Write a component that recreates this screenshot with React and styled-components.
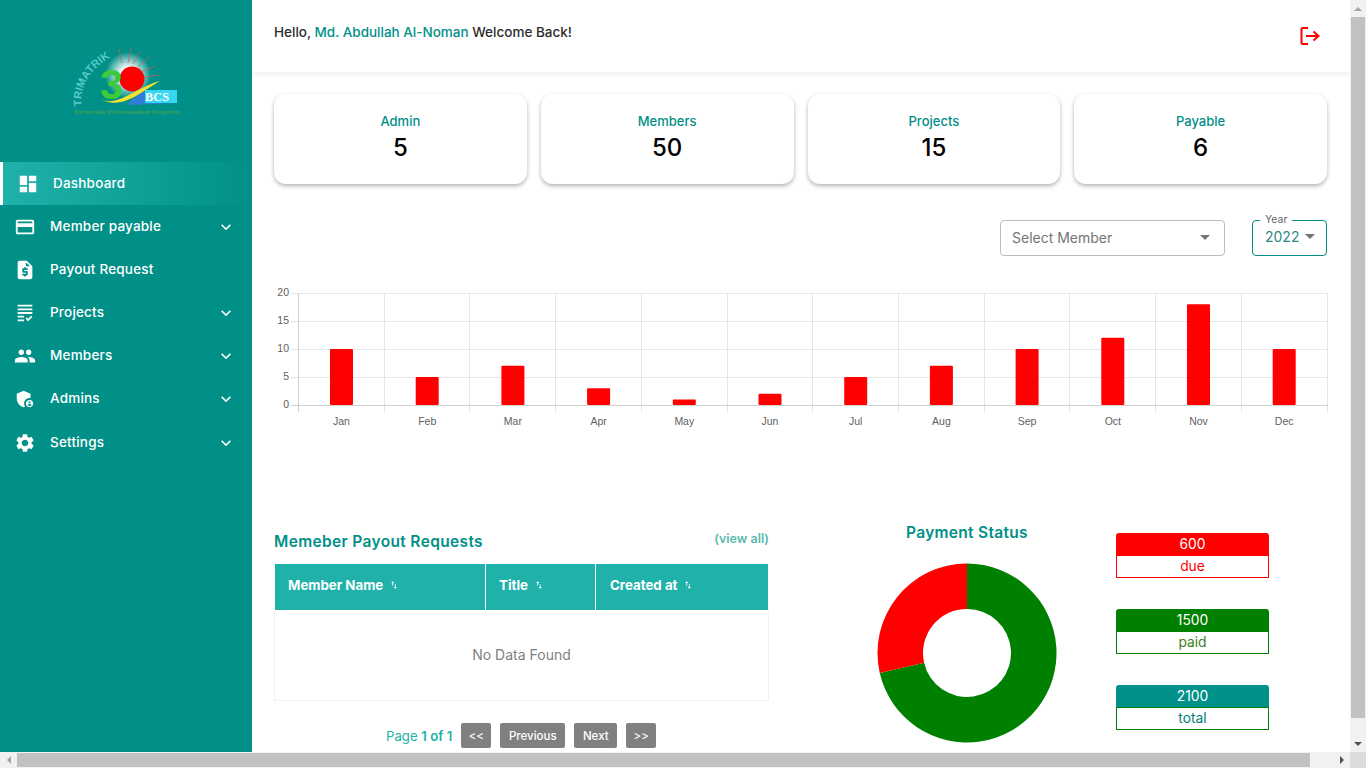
import React from "react";
import styled, { createGlobalStyle } from "styled-components";
import {
  MdDashboard,
  MdCreditCard,
  MdRequestQuote,
  MdGrading,
  MdPeople,
  MdAdminPanelSettings,
  MdSettings,
  MdKeyboardArrowDown,
  MdSwapVert,
} from "react-icons/md";

const TEAL = "#009087";
const SEA = "#20b2aa";

const menu = [
  { label: "Member payable", Icon: MdCreditCard, arrow: true },
  { label: "Payout Request", Icon: MdRequestQuote },
  { label: "Projects", Icon: MdGrading, arrow: true },
  { label: "Members", Icon: MdPeople, arrow: true },
  { label: "Admins", Icon: MdAdminPanelSettings, arrow: true },
  { label: "Settings", Icon: MdSettings, arrow: true },
];
const cards = [
  { label: "Admin", value: 5 },
  { label: "Members", value: 50 },
  { label: "Projects", value: 15 },
  { label: "Payable", value: 6 },
];
const months = [
  ["Jan", 10], ["Feb", 5], ["Mar", 7], ["Apr", 3], ["May", 1], ["Jun", 2],
  ["Jul", 5], ["Aug", 7], ["Sep", 10], ["Oct", 12], ["Nov", 18], ["Dec", 10],
];
const stats = [
  { value: 600, label: "due", head: "red", line: "red", text: "red" },
  { value: 1500, label: "paid", head: "green", line: "green", text: "#3d7d20" },
  { value: 2100, label: "total", head: "#00918a", line: "green", text: "#00807a" },
];
const pages = [
  { label: "<<", width: 30 },
  { label: "Previous", width: 65 },
  { label: "Next", width: 43 },
  { label: ">>", width: 30 },
];

const Logo = () => (
  <svg width="123" height="76" viewBox="66 44 123 76">
    <defs>
      <radialGradient id="glow">
        <stop offset="30%" stopColor="#fff" />
        <stop offset="100%" stopColor="#fff" stopOpacity="0" />
      </radialGradient>
      <path id="arc" d="M82 105 C 78 84 94 60 126 50" fill="none" />
    </defs>
    <circle cx="128" cy="74" r="23" fill="url(#glow)" />
    <g stroke="#d8565f" strokeWidth="0.7">
      <path d="M122 62 L119 48M128 62 L131 46M133 63 L140 50M138 66 L150 55M141 71 L155 65M143 76 L158 74" />
    </g>
    <circle cx="132" cy="78" r="12.5" fill="#f00" />
    <text x="100" y="98" fontFamily="'Liberation Sans', sans-serif" fontWeight="700" fontSize="42" fill="#3ecb3a" textLength="23" lengthAdjust="spacingAndGlyphs">3</text>
    <path d="M126 104 L142 90 L177 89 L177 102Z" fill="#2f7fd8" />
    <path d="M100 98 C 118 107 136 86 160 80 C 142 90 122 110 100 98Z" fill="#f4e32c" />
    <rect x="145" y="89" width="32" height="13" fill="#35d7f2" />
    <text x="145" y="100" fontFamily="'Liberation Serif', serif" fontWeight="700" fontSize="12" fill="#fff" textLength="24" lengthAdjust="spacingAndGlyphs">BCS</text>
    <text fontFamily="'Liberation Sans', sans-serif" fontWeight="700" fontSize="11" fill="#55c9cc">
      <textPath href="#arc">TRIMATRIK</textPath>
    </text>
    <text x="74" y="113" fontFamily="'Liberation Serif', serif" fontWeight="700" fontSize="6.5" fill="#3f9f58" textLength="106">Partnership Professionalism Prosperity</text>
  </svg>
);

const LogoutIcon = () => (
  <LogoutSvg width="20" height="20" viewBox="0 0 20 20" fill="none" stroke="#f00" strokeWidth="2">
    <path d="M8 2 H3 a1.5 1.5 0 0 0 -1.5 1.5 V16.5 a1.5 1.5 0 0 0 1.5 1.5 H8" />
    <path d="M6 10 H18.5 M13.5 5.5 L18.5 10 L13.5 14.5" />
  </LogoutSvg>
);

const BarChart = () => (
  <svg width="1056" height="150" viewBox="274 285 1056 150">
    {[293, 321, 349, 377].map((y) => (
      <line key={y} x1="291" x2="1328" y1={y + 0.5} y2={y + 0.5} stroke="#e6e6e6" />
    ))}
    {months.map((_, i) => {
      const x = Math.round(298 + i * 85.7) + 0.5;
      return <line key={i} x1={x} x2={x} y1="293" y2="412" stroke={i === 0 ? "#d0d0d0" : "#e6e6e6"} />;
    })}
    <line x1="1327.5" x2="1327.5" y1="293" y2="412" stroke="#e6e6e6" />
    <line x1="291" x2="1328" y1="405.5" y2="405.5" stroke="#d0d0d0" />
    {months.map(([name, value], i) => {
      const center = 341.5 + i * 85.7;
      return (
        <g key={name}>
          <rect x={center - 11.5} y={405 - value * 5.6} width="23" height={value * 5.6} rx="1" fill="#f00" />
          <text x={center} y="425" textAnchor="middle" fontFamily="'Liberation Sans', sans-serif" fontSize="10.5" fill="#5f5f5f">{name}</text>
        </g>
      );
    })}
    {[20, 15, 10, 5, 0].map((v, i) => (
      <text key={v} x="289" y={296 + i * 28} textAnchor="end" fontFamily="'Liberation Sans', sans-serif" fontSize="10.5" fill="#5f5f5f">{v}</text>
    ))}
  </svg>
);

// green goes clockwise from the top, red closes the ring: 600 of 2100
const Donut = () => {
  const point = (r, deg) => {
    const a = (deg * Math.PI) / 180;
    return `${90 + r * Math.sin(a)} ${90 - r * Math.cos(a)}`;
  };
  const end = (1500 / 2100) * 360;
  return (
    <svg width="180" height="180" viewBox="0 0 180 180">
      <path d={`M${point(89.5, 0)} A89.5 89.5 0 1 1 ${point(89.5, end)} L${point(44, end)} A44 44 0 1 0 ${point(44, 0)}Z`} fill="green" />
      <path d={`M${point(89.5, end)} A89.5 89.5 0 0 1 ${point(89.5, 360)} L${point(44, 360)} A44 44 0 0 0 ${point(44, end)}Z`} fill="#f00" />
    </svg>
  );
};

const App = () => {
  return (
    <>
      <GlobalStyle />
      <Frame>
        <Upper>
          <Sidebar>
            <LogoBox>
              <Logo />
            </LogoBox>
            <ActiveItem>
              <MdDashboard size={22} />
              <MenuLabel>Dashboard</MenuLabel>
            </ActiveItem>
            {menu.map(({ label, Icon, arrow }) => (
              <MenuItem key={label}>
                <Icon size={22} />
                <MenuLabel>{label}</MenuLabel>
                {arrow && <MdKeyboardArrowDown size={20} />}
              </MenuItem>
            ))}
          </Sidebar>
          <Main>
            <Header>
              <Hello>
                Hello, <Name>Md. Abdullah Al-Noman</Name> Welcome Back!
              </Hello>
              <LogoutIcon />
            </Header>
            <Content>
              <Cards>
                {cards.map((c) => (
                  <Card key={c.label}>
                    <CardLabel>{c.label}</CardLabel>
                    <CardValue>{c.value}</CardValue>
                  </Card>
                ))}
              </Cards>
              <Filters>
                <MemberSelect>
                  Select Member
                  <Caret />
                </MemberSelect>
                <YearSelect>
                  <YearLegend>Year</YearLegend>
                  2022
                  <Caret />
                </YearSelect>
              </Filters>
              <ChartBox>
                <BarChart />
              </ChartBox>
              <Bottom>
                <Requests>
                  <TitleRow>
                    <Title>Memeber Payout Requests</Title>
                    <ViewAll>(view all)</ViewAll>
                  </TitleRow>
                  <TableHead>
                    <HeadCell>Member Name <MdSwapVert size={10} /></HeadCell>
                    <HeadCell>Title <MdSwapVert size={10} /></HeadCell>
                    <HeadCell>Created at <MdSwapVert size={10} /></HeadCell>
                  </TableHead>
                  <TableBody>No Data Found</TableBody>
                  <Pager>
                    <PageText>Page <strong>1 of 1</strong></PageText>
                    {pages.map((p) => (
                      <PageButton key={p.label} $width={p.width}>{p.label}</PageButton>
                    ))}
                  </Pager>
                </Requests>
                <Payment>
                  <PaymentTitle>Payment Status</PaymentTitle>
                  <Donut />
                </Payment>
                <Stats>
                  {stats.map((s) => (
                    <Stat key={s.label}>
                      <StatHead $bg={s.head}>{s.value}</StatHead>
                      <StatBody $line={s.line} $text={s.text}>{s.label}</StatBody>
                    </Stat>
                  ))}
                </Stats>
              </Bottom>
            </Content>
          </Main>
          <VBar>
            <BarButton><ArrowUp /></BarButton>
            <VThumb />
            <BarButton $end><ArrowDown /></BarButton>
          </VBar>
        </Upper>
        <HBar>
          <HButton><ArrowLeft /></HButton>
          <HThumb />
          <HButton $end><ArrowRight /></HButton>
          <Corner />
        </HBar>
      </Frame>
    </>
  );
};

const GlobalStyle = createGlobalStyle`
  html, body {
    margin: 0;
    overflow: hidden;
    background: #fff;
  }
  * {
    box-sizing: border-box;
  }
`;
const Frame = styled.div`
  width: 1366px;
  height: 768px;
  display: flex;
  flex-direction: column;
  overflow: hidden;
  font-family: Inter, "Noto Sans", sans-serif;
`;
const Upper = styled.div`
  flex: 1;
  min-height: 0;
  display: flex;
`;
const Sidebar = styled.nav`
  width: 252px;
  flex-shrink: 0;
  background: ${TEAL};
  color: #fff;
`;
const LogoBox = styled.div`
  height: 162px;
  display: flex;
  justify-content: center;
  padding-top: 45px;
  padding-left: 3px;
`;
const ActiveItem = styled.div`
  height: 43px;
  display: flex;
  align-items: center;
  gap: 14px;
  padding-left: 14px;
  border-left: 3px solid #fff;
  background: linear-gradient(90deg, ${SEA}, ${TEAL});
  font-size: 13.5px;
  font-weight: 500;
  letter-spacing: 0.2px;
`;
const MenuItem = styled.div`
  height: 43.2px;
  display: flex;
  align-items: center;
  gap: 14px;
  padding: 0 16px 0 14px;
  font-size: 13.5px;
  font-weight: 500;
  letter-spacing: 0.2px;
`;
const MenuLabel = styled.span`
  flex: 1;
  margin-top: -2px;
`;
const Main = styled.main`
  flex: 1;
  min-width: 0;
  display: flex;
  flex-direction: column;
  overflow: hidden;
`;
const Header = styled.header`
  height: 72px;
  flex-shrink: 0;
  display: flex;
  justify-content: space-between;
  padding: 25px 30px 0 22px;
  background: #fff;
  box-shadow: 0 2px 6px rgba(0, 0, 0, 0.07);
`;
const Hello = styled.div`
  font-size: 13.5px;
  font-weight: 500;
  line-height: 14px;
  color: #2b2b2b;
`;
const LogoutSvg = styled.svg`
  margin-top: 1px;
`;
const Name = styled.span`
  color: ${TEAL};
`;
const Content = styled.div`
  padding: 22px 23px 0 22px;
`;
const Cards = styled.div`
  display: grid;
  grid-template-columns: repeat(4, 1fr);
  gap: 14px;
`;
const Card = styled.div`
  height: 90px;
  display: flex;
  flex-direction: column;
  align-items: center;
  padding-top: 19px;
  border-radius: 12px;
  background: #fff;
  box-shadow: 0 2px 4px rgba(0, 0, 0, 0.3);
`;
const CardLabel = styled.div`
  font-size: 13px;
  font-weight: 500;
  line-height: 16px;
  color: ${TEAL};
`;
const CardValue = styled.div`
  margin-top: 5px;
  font-size: 24px;
  font-weight: 500;
  line-height: 28px;
  color: #000;
`;
const Filters = styled.div`
  margin-top: 36px;
  display: flex;
  justify-content: flex-end;
  gap: 27px;
`;
const MemberSelect = styled.div`
  width: 225px;
  height: 36px;
  display: flex;
  align-items: center;
  justify-content: space-between;
  padding: 0 14px 2px 11px;
  border: 1px solid #bdbdbd;
  border-radius: 4px;
  font-size: 14px;
  color: #757575;
`;
const YearSelect = styled.div`
  position: relative;
  width: 75px;
  height: 36px;
  display: flex;
  align-items: center;
  justify-content: space-between;
  padding: 0 11px 4px 12px;
  border: 1px solid ${TEAL};
  border-radius: 4px;
  font-size: 14px;
  color: #2d8a80;
`;
const YearLegend = styled.span`
  position: absolute;
  top: -7px;
  left: 7px;
  padding: 0 5px;
  background: #fff;
  font-size: 10.5px;
  line-height: 12px;
  color: #666;
`;
const Caret = styled.i`
  width: 0;
  height: 0;
  border-left: 5px solid transparent;
  border-right: 5px solid transparent;
  border-top: 5px solid #757575;
`;
const ChartBox = styled.div`
  margin-top: 29px;
  height: 150px;
`;
const Bottom = styled.section`
  margin-top: 98px;
  display: flex;
`;
const Requests = styled.div`
  width: 495px;
  flex-shrink: 0;
`;
const TitleRow = styled.div`
  height: 31px;
  display: flex;
  justify-content: space-between;
`;
const Title = styled.h3`
  margin: 0;
  font-size: 15.5px;
  font-weight: 600;
  line-height: 18px;
  letter-spacing: 0.35px;
  color: ${TEAL};
`;
const ViewAll = styled.span`
  font-size: 12.5px;
  font-weight: 600;
  line-height: 10px;
  padding-top: 1px;
  color: #5bb8ae;
`;
const TableHead = styled.div`
  height: 46px;
  display: grid;
  grid-template-columns: 211px 110px 1fr;
  background: ${SEA};
  border: 1px solid #fff;
  border-width: 0 1px;
`;
const HeadCell = styled.div`
  display: flex;
  align-items: center;
  gap: 6px;
  padding: 0 0 5px 13px;
  border-right: 1px solid #fff;
  font-size: 13.3px;
  font-weight: 700;
  color: #fff;
  &:last-child {
    border-right: 0;
    padding-left: 14px;
  }
`;
const TableBody = styled.div`
  height: 91px;
  display: flex;
  align-items: center;
  justify-content: center;
  padding-bottom: 2px;
  border: 1px solid #f2f2f2;
  border-top: 0;
  font-size: 14px;
  color: #808080;
`;
const Pager = styled.div`
  margin-top: 22px;
  display: flex;
  align-items: center;
  gap: 9px;
  padding-left: 112px;
`;
const PageText = styled.span`
  font-size: 13.2px;
  color: ${SEA};
  strong {
    font-weight: 600;
    color: ${SEA};
  }
`;
const PageButton = styled.button`
  width: ${(p) => p.$width}px;
  height: 25px;
  padding: 0;
  border: 0;
  border-radius: 2px;
  background: #808080;
  font-family: inherit;
  font-size: 11.5px;
  font-weight: 500;
  color: #fff;
`;
const Payment = styled.div`
  width: 180px;
  margin-left: 108px;
  flex-shrink: 0;
  text-align: center;
`;
const PaymentTitle = styled.h3`
  margin: 0 0 20px;
  height: 10px;
  font-size: 15.5px;
  font-weight: 600;
  line-height: 0;
  letter-spacing: 0.3px;
  white-space: nowrap;
  color: ${TEAL};
`;
const Stats = styled.div`
  width: 153px;
  margin-left: 59px;
  display: flex;
  flex-direction: column;
  gap: 31px;
`;
const Stat = styled.div`
  font-size: 13.8px;
  text-align: center;
`;
const StatHead = styled.div`
  height: 22px;
  line-height: 22px;
  border-radius: 3px 3px 0 0;
  background: ${(p) => p.$bg};
  color: #fff;
`;
const StatBody = styled.div`
  height: 23px;
  line-height: 20px;
  border: 1.5px solid ${(p) => p.$line};
  color: ${(p) => p.$text};
`;
const VBar = styled.div`
  width: 16px;
  flex-shrink: 0;
  display: flex;
  flex-direction: column;
  background: #f1f1f1;
`;
const VThumb = styled.div`
  height: 701px;
  margin: 0 1px;
  background: #c1c1c1;
`;
const BarButton = styled.div`
  width: 16px;
  height: 17px;
  display: flex;
  align-items: center;
  justify-content: center;
  margin-top: ${(p) => (p.$end ? "auto" : "0")};
`;
const HBar = styled.div`
  height: 16px;
  flex-shrink: 0;
  display: flex;
  align-items: stretch;
  background: #f1f1f1;
`;
const HThumb = styled.div`
  width: 1293px;
  margin: 1px 0;
  background: #c1c1c1;
`;
const HButton = styled.div`
  width: 17px;
  display: flex;
  align-items: center;
  justify-content: center;
  margin-left: ${(p) => (p.$end ? "auto" : "0")};
`;
const ArrowUp = styled.i`
  border-left: 4px solid transparent;
  border-right: 4px solid transparent;
  border-bottom: 4px solid #a3a3a3;
`;
const ArrowDown = styled.i`
  border-left: 4px solid transparent;
  border-right: 4px solid transparent;
  border-top: 4px solid #505050;
`;
const ArrowLeft = styled.i`
  border-top: 4px solid transparent;
  border-bottom: 4px solid transparent;
  border-right: 4px solid #a3a3a3;
`;
const ArrowRight = styled.i`
  border-top: 4px solid transparent;
  border-bottom: 4px solid transparent;
  border-left: 4px solid #505050;
`;
const Corner = styled.div`
  width: 16px;
  background: #dcdcdc;
`;

export default App;
